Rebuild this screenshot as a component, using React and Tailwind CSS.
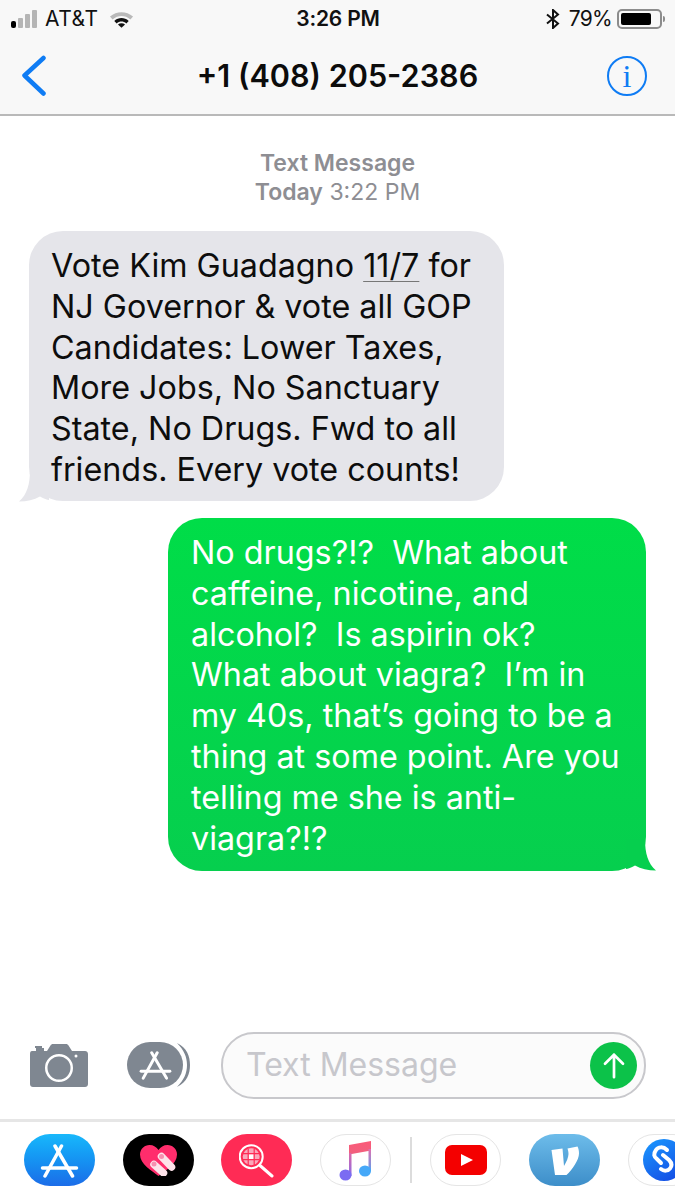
import React from 'react';

const font = { fontFamily: 'Inter, "Liberation Sans", sans-serif' };

const received = [
  ['Vote Kim Guadagno ', '11/7', ' for'],
  ['NJ Governor & vote all GOP'],
  ['Candidates: Lower Taxes,'],
  ['More Jobs, No Sanctuary'],
  ['State, No Drugs. Fwd to all'],
  ['friends. Every vote counts!'],
];

const sent = [
  'No drugs?!?  What about',
  'caffeine, nicotine, and',
  'alcohol?  Is aspirin ok?',
  'What about viagra?  I’m in',
  'my 40s, that’s going to be a',
  'thing at some point. Are you',
  'telling me she is anti-',
  'viagra?!?',
];

function StoreGlyph({ className }) {
  return (
    <svg viewBox="16 7 39 35" className={className}>
      <g stroke="white" strokeWidth="3.5" strokeLinecap="round" fill="none">
        <path d="M37.5 10 21 40" />
        <path d="M31 10 48.5 40" />
        <path d="M18.5 32H52.5" />
      </g>
    </svg>
  );
}

function StatusBar() {
  return (
    <div className="grid grid-cols-[1fr_auto_1fr] items-center h-[37px] pl-[11px] pr-[10px] text-[21px] text-[#111]">
      <div className="flex items-center">
        <div className="flex items-end gap-[2px] h-[18px]">
          <div className="w-[5px] h-[7px] rounded-[2px] bg-black" />
          <div className="w-[5px] h-[10px] rounded-[1px] bg-[#b5b5b5]" />
          <div className="w-[5px] h-[14px] rounded-[1px] bg-[#b5b5b5]" />
          <div className="w-[5px] h-[18px] rounded-[1px] bg-[#b5b5b5]" />
        </div>
        <span className="ml-[8px] tracking-[0.5px]">AT&amp;T</span>
        <svg viewBox="0 0 26 18" className="w-[25px] h-[18px] ml-[11px]">
          <path d="M1 6.5C8 .5 18 .5 25 6.5L22.3 9.5C16.5 4.7 9.5 4.7 3.7 9.5Z" fill="#b9b9b9" />
          <path d="M5.5 11C10 7 16 7 20.5 11L18 13.6C15 11 11 11 8 13.6Z" fill="#111" />
          <path d="M9.3 14.6C11.5 13 14.5 13 16.7 14.6L13 18Z" fill="#111" />
        </svg>
      </div>
      <span className="font-semibold tracking-[-0.2px]">3:26 PM</span>
      <div className="flex items-center justify-end">
        <svg viewBox="0 0 14 20" className="w-[14px] h-[20px]" fill="none" stroke="#111" strokeWidth="2">
          <path d="M1 5.5 12 14.5 7 19V1L12 5.5 1 14.5" />
        </svg>
        <span className="ml-[9px] tracking-[-0.7px]">79%</span>
        <div className="ml-[5px] w-[45px] h-[20px] rounded-[5px] border-2 border-[#8c8c8c] p-[2px]">
          <div className="w-[30px] h-full rounded-[2px] bg-black" />
        </div>
        <div className="ml-[1px] w-[2px] h-[6px] rounded-r-[2px] bg-[#8c8c8c]" />
      </div>
    </div>
  );
}

function NavBar() {
  return (
    <div className="grid grid-cols-[1fr_auto_1fr] items-center h-[78px] px-[21px] pb-[1px]">
      <svg viewBox="0 0 26 42" className="w-[26px] h-[42px]" fill="none" stroke="#0f7cf4" strokeWidth="4.5" strokeLinecap="round" strokeLinejoin="round">
        <path d="M22.5 3 3.5 20.5 22.5 38.5" />
      </svg>
      <h1 className="text-[30.6px] font-semibold text-[#0c0c0c]">+1 (408) 205-2386</h1>
      <div className="justify-self-end mr-[7px] flex items-center justify-center w-[40px] h-[40px] rounded-full border-2 border-[#0f7cf4]">
        <span className="text-[32px] leading-none text-[#0f7cf4]" style={{ fontFamily: '"Liberation Serif", serif' }}>i</span>
      </div>
    </div>
  );
}

function Messages() {
  return (
    <div className="flex-1 pt-[33px]">
      <div className="text-center text-[23px] leading-[29px] text-[#8e8e93]">
        <div className="font-semibold">Text Message</div>
        <div><span className="font-semibold">Today</span> 3:22 PM</div>
      </div>
      <div className="relative mt-[24px] ml-[29px] w-[475px] h-[270px] rounded-[34px] bg-[#e5e5ea] pt-[15px] pl-[22px] text-[32.3px] leading-[40.8px] text-[#0d0d0d] whitespace-pre">
        {received.map((line, i) => (
          <div key={i}>
            {line.map((part, j) =>
              part === '11/7' ? <span key={j} className="underline decoration-[#777] decoration-1 underline-offset-4">{part}</span> : <span key={j}>{part}</span>
            )}
          </div>
        ))}
        <svg viewBox="0 0 30 32" className="absolute left-[-10px] bottom-[-1px] w-[30px] h-[32px]">
          <path d="M11 0C11 14 8 25 0 31.5 8 31.5 15 30 21 26.5 25 28.5 28 30 30 30V0Z" fill="#e5e5ea" />
        </svg>
      </div>
      <div className="relative mt-[17px] ml-[168px] w-[478px] h-[353px] rounded-[34px] bg-linear-to-b from-[#00dd48] to-[#06cf4e] pt-[15px] pl-[23px] text-[32.3px] leading-[40.8px] text-white whitespace-pre">
        {sent.map((line, i) => (
          <div key={i} className="relative">{line}</div>
        ))}
        <svg viewBox="0 0 30 32" className="absolute right-[-10px] bottom-0 w-[30px] h-[32px]">
          <path d="M19 0C19 14 22 25 30 31.5 22 31.5 15 30 9 26.5 5 28.5 2 30 0 30V0Z" fill="#06cf4e" />
        </svg>
      </div>
    </div>
  );
}

function Composer() {
  return (
    <div className="flex items-center h-[88px] mb-[10px] pl-[30px] pr-[29px]">
      <svg viewBox="0 0 58 44" className="w-[58px] h-[44px]">
        <path fillRule="evenodd" fill="#7f8791" d="M2 8H6V5H14V8H17L20.5 2.5C21 1.5 22 1 23 1H36C37 1 38 1.5 38.5 2.500L42 8H55C56.7 8 58 9.3 58 11V41C58 42.7 56.700 44 55 44H3C1.3 44 0 42.7 0 41V11C0 9.3 .6 8 2 8ZM29 11A14 14 0 1 0 29 39 14 14 0 0 0 29 11ZM29 13.500A11.500 11.500 0 1 1 29 36.500 11.500 11.500 0 0 1 29 13.500Z" />
        <rect x="5" y="3" width="7" height="2" fill="#7f8791" />
        <circle cx="46" cy="13" r="1.5" fill="white" />
      </svg>
      <div className="relative ml-[39px] w-[63px] h-[46px]">
        <div className="w-[56px] h-[46px] rounded-[23px] bg-[#7f8791] flex items-center justify-center">
          <StoreGlyph className="w-[33px] h-[30px]" />
        </div>
        <svg viewBox="0 0 15 46" className="absolute right-0 top-0 w-[15px] h-[46px]" fill="#7f8791">
          <path d="M2 1C12 6 15 14 15 23 15 32 12 40 2 45 9 38 12 31 12 23 12 15 9 8 2 1Z" />
        </svg>
      </div>
      <div className="ml-[31px] flex-1 h-[67px] rounded-[33px] border-2 border-[#c8c8cc] bg-[#fbfbfb] flex items-center justify-between pl-[23px] pr-[7px]">
        <span className="text-[32px] text-[#c7c7cc]">Text Message</span>
        <div className="w-[47px] h-[47px] rounded-full bg-[#0cc249] flex items-center justify-center">
          <svg viewBox="0 0 24 30" className="w-[22px] h-[27px]" fill="none" stroke="white" strokeWidth="3" strokeLinecap="round" strokeLinejoin="round">
            <path d="M12 28V3M2 13 12 3 22 13" />
          </svg>
        </div>
      </div>
    </div>
  );
}

function AppPill({ className, children }) {
  return (
    <div className={`shrink-0 w-[71px] h-[52px] rounded-[26px] flex items-center justify-center ${className}`}>
      {children}
    </div>
  );
}

function AppDrawer() {
  return (
    <div className="h-[81px] border-t-[3px] border-[#e6e6e6] flex items-start gap-[27.7px] pl-[24px] pt-[12px] overflow-hidden">
      <AppPill className="bg-linear-to-b from-[#19b8fb] to-[#1c6ce8]">
        <StoreGlyph className="w-[39px] h-[35px]" />
      </AppPill>
      <AppPill className="bg-black">
        <svg viewBox="0 0 37 31" className="w-[37px] h-[31px]">
          <path d="M18.500 31C12 26 0 19 0 9.500 0 4 4.500 0 9.500 0 13.500 0 16.500 2 18.500 5 20.500 2 23.500 0 27.500 0 32.500 0 37 4 37 9.500 37 19 25 26 18.500 31Z" fill="#ff2d6c" />
          <path d="M14 19.500 23.500 28" stroke="#fde3ea" strokeWidth="7.500" strokeLinecap="round" />
          <path d="M21.500 11.500 31.500 22" stroke="#fde3ea" strokeWidth="7.500" strokeLinecap="round" />
          <circle cx="14" cy="19" r="2.500" fill="#f78fb0" />
          <circle cx="21.500" cy="11.500" r="2.500" fill="#f78fb0" />
        </svg>
      </AppPill>
      <AppPill className="bg-[#ff2b55]">
        <svg viewBox="0 0 36 36" className="w-[36px] h-[36px]" fill="none" stroke="white">
          <circle cx="12.200" cy="14.700" r="11.500" strokeWidth="2" />
          <circle cx="12.200" cy="14.700" r="8.500" fill="#f9a8bb" stroke="none" />
          <rect x="9.700" y="12.200" width="5" height="5" fill="white" stroke="none" />
          <path d="M4 11.700H20.500M4 17.700H20.500M9.200 6.500V23M15.200 6.500V23" stroke="#ff2b55" strokeWidth="1.200" />
          <path d="M21 23.500 33 34" strokeWidth="3" strokeLinecap="round" />
        </svg>
      </AppPill>
      <AppPill className="bg-white border border-[#e5e5e5]">
        <svg viewBox="0 0 34 41" className="w-[34px] h-[41px]">
          <defs>
            <linearGradient id="barPink" x1="0" y1="0" x2="0" y2="1">
              <stop offset="0" stopColor="#fb5a78" />
              <stop offset="1" stopColor="#f0607f" />
            </linearGradient>
            <linearGradient id="stemLeft" gradientUnits="userSpaceOnUse" x1="0" y1="10" x2="0" y2="40">
              <stop offset="0" stopColor="#e868a0" />
              <stop offset="1" stopColor="#7b6cf2" />
            </linearGradient>
            <linearGradient id="stemRight" gradientUnits="userSpaceOnUse" x1="0" y1="9" x2="0" y2="35">
              <stop offset="0" stopColor="#e070b0" />
              <stop offset="1" stopColor="#45a8f8" />
            </linearGradient>
          </defs>
          <path fill="url(#barPink)" d="M10 5 32 1V10.500L10 14.500Z" />
          <rect x="10" y="13" width="2.500" height="23" fill="url(#stemLeft)" />
          <rect x="29.500" y="9" width="2.500" height="22" fill="url(#stemRight)" />
          <ellipse cx="6.500" cy="35" rx="6" ry="5.500" fill="#7b6cf2" />
          <ellipse cx="26" cy="31" rx="6" ry="5.500" fill="#45a8f8" />
        </svg>
      </AppPill>
      <div className="shrink-0 w-[2px] h-[46px] mt-[3px] -mx-[9px] bg-[#dcdcdc]" />
      <AppPill className="bg-white border border-[#e5e5e5]">
        <svg viewBox="0 0 42 30" className="w-[42px] h-[30px]">
          <rect width="42" height="30" rx="7" fill="#f40000" />
          <path d="M16 9 28 15 16 21Z" fill="white" />
        </svg>
      </AppPill>
      <AppPill className="bg-linear-to-b from-[#6dbcea] to-[#3d8ec9]">
        <svg viewBox="0 0 28 29" className="w-[28px] h-[29px]">
          <path fill="white" d="M.5 4 11.500 2.500 13 20C15.500 16 17.500 11 17.500 8 17.500 6 17 4 16.500 2.500L26.500 .5C27.500 2.500 28 4.500 28 7.500 28 14 21 24 15.500 29H4Z" />
        </svg>
      </AppPill>
      <AppPill className="bg-white border border-[#e5e5e5] justify-start pl-[14px]">
        <svg viewBox="0 0 42 42" className="w-[42px] h-[42px] shrink-0">
          <defs>
            <linearGradient id="shazam" x1="0" y1="0" x2="0.6" y2="1">
              <stop offset="0" stopColor="#1a9aff" />
              <stop offset="1" stopColor="#1552e6" />
            </linearGradient>
          </defs>
          <circle cx="21" cy="21" r="21" fill="url(#shazam)" />
          <g fill="none" stroke="white" strokeWidth="4" strokeLinecap="round">
            <path d="M24 11C20 7 15 8 13 11 10 15 11 18 14 20L18 24" />
            <path d="M20 16 26 21C29 24 29 27 27 29.500 25 32 21 32.500 18 30" />
          </g>
        </svg>
      </AppPill>
    </div>
  );
}

export default function App() {
  return (
    <div className="w-[675px] h-[1200px] bg-white flex flex-col overflow-hidden" style={font}>
      <header className="h-[116px] bg-[#f8f8f8] border-b-2 border-[#b9b9b9]">
        <StatusBar />
        <NavBar />
      </header>
      <Messages />
      <Composer />
      <AppDrawer />
    </div>
  );
}
